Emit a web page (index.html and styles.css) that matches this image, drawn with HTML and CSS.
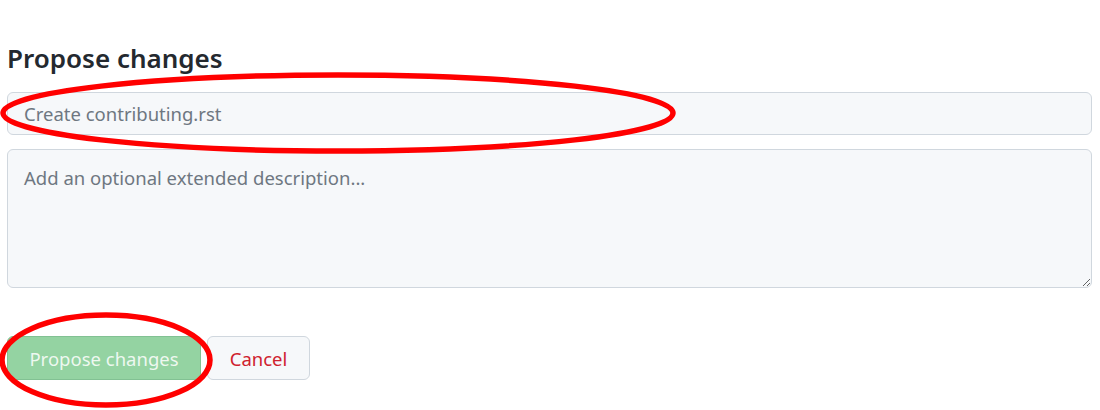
FILE: index.html
```html
<!DOCTYPE html>
<html lang="en">
<head>
<meta charset="utf-8">
<link rel="stylesheet" href="styles.css">
</head>
<body>
<main class="page">
  <h2 class="title">Propose changes</h2>
  <input class="field summary" type="text" placeholder="Create contributing.rst">
  <textarea class="field description" placeholder="Add an optional extended description..."></textarea>
  <div class="actions">
    <button class="btn btn-primary" type="button" disabled>Propose changes</button>
    <button class="btn btn-cancel" type="button">Cancel</button>
  </div>
</main>
<svg class="annotations" width="1100" height="410" viewBox="0 0 1100 410" aria-hidden="true">
  <ellipse cx="338" cy="113" rx="335" ry="38" fill="none" stroke="#ff0000" stroke-width="5.5"/>
  <ellipse cx="106" cy="360" rx="104" ry="45" fill="none" stroke="#ff0000" stroke-width="5.5"/>
</svg>
</body>
</html>
```
FILE: styles.css
```css
html, body {
  margin: 0;
  padding: 0;
  background: #ffffff;
}
body {
  font-family: "Noto Sans", "Open Sans", sans-serif;
  color: #24292f;
  position: relative;
  width: 1100px;
  height: 410px;
  overflow: hidden;
}
.page {
  display: flex;
  flex-direction: column;
  padding: 40px 8px 0 7px;
}
.title {
  margin: 0 0 16px 0;
  font-size: 26px;
  font-weight: 600;
  line-height: 36px;
  color: #24292f;
}
.field {
  box-sizing: border-box;
  width: 100%;
  font-family: inherit;
  font-size: 18.5px;
  color: #24292f;
  background: #f6f8fa;
  border: 1px solid #d0d7de;
  border-radius: 6px;
  outline: none;
}
.field::placeholder {
  color: #6e7781;
  opacity: 1;
}
.summary {
  height: 43px;
  padding: 0 16px;
  line-height: 27px;
}
.description {
  margin-top: 14px;
  height: 139px;
  padding: 14px 16px;
  line-height: 27px;
  resize: vertical;
}
.actions {
  display: flex;
  gap: 6px;
  margin-top: 48px;
}
.btn {
  box-sizing: border-box;
  height: 44px;
  padding: 0 20px;
  font-family: inherit;
  font-size: 18.5px;
  line-height: 27px;
  border-radius: 6px;
  border: 1px solid #d0d7de;
  cursor: pointer;
}
.btn-primary {
  width: 194px;
  background: #94d3a2;
  border-color: #82c193;
  color: rgba(255, 255, 255, 0.85);
}
.btn-cancel {
  width: 103px;
  background: #f6f8fa;
  color: #cf222e;
}
.annotations {
  position: absolute;
  left: 0;
  top: 0;
  pointer-events: none;
}
```
